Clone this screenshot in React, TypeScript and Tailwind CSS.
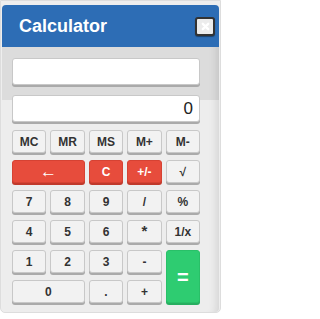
import React from 'react';

type Key = { label: string; span?: string; tone?: 'red' | 'green'; text?: string };

const keys: Key[] = [
  { label: 'MC' }, { label: 'MR' }, { label: 'MS' }, { label: 'M+' }, { label: 'M-' },
  { label: '←', span: 'col-span-2', tone: 'red', text: 'text-[17px] font-normal' }, { label: 'C', tone: 'red' }, { label: '+/-', tone: 'red' }, { label: '√' },
  { label: '7' }, { label: '8' }, { label: '9' }, { label: '/' }, { label: '%' },
  { label: '4' }, { label: '5' }, { label: '6' }, { label: '*', text: 'text-[15px]' }, { label: '1/x' },
  { label: '1' }, { label: '2' }, { label: '3' }, { label: '-' }, { label: '=', span: 'row-span-2', tone: 'green', text: 'text-[20px]' },
  { label: '0', span: 'col-span-2' }, { label: '.' }, { label: '+' },
];

const toneClass = (tone?: string) => {
  if (tone === 'red') return 'bg-[#e74c3c] text-white border-[#d64233] shadow-[0_2px_0_#c0392b]';
  if (tone === 'green') return 'bg-[#2ecc71] text-white border-[#29c068] shadow-[0_2px_0_#27ae60]';
  return 'bg-[#f2f2f2] text-[#333] border-[#c8c8c8] shadow-[0_2px_0_#aaaaaa]';
};

const App = () => {
  return (
    <div className="font-['Liberation_Sans',Arial,sans-serif] bg-white w-[225px] h-[319px]">
      <div className="w-[221px] h-[313px] bg-[#eeeeee] border border-[#dddddd] rounded-b-[5px] pt-[4px] px-[1px] flex flex-col">
        <div className="h-[42px] bg-[#2d6db5] rounded-t-[4px] flex items-center justify-between pl-[17px] pr-[4px]">
          <span className="text-white font-bold text-[18px]">Calculator</span>
          <div className="w-[20px] h-[19px] rounded-[3px] border-2 border-[#333] bg-[#ececec] flex items-center justify-center shadow-[0_1px_1px_rgba(0,0,0,0.4)]">
            <svg width="9" height="9" viewBox="0 0 10 10">
              <path d="M2 2 L8 8 M8 2 L2 8" stroke="#ffffff" strokeWidth="2.6" strokeLinecap="round" />
            </svg>
          </div>
        </div>
        <div className="flex-1 rounded-b-[4px] bg-[linear-gradient(to_bottom,#dcdcdc_0,#dcdcdc_53px,#ededed_53px)] shadow-[inset_-10px_0_8px_-8px_rgba(0,0,0,0.12)] pl-[10px] pt-[11px]">
          <div className="w-[188px] h-[27px] bg-white border border-[#c8c8c8] rounded-[3px] shadow-[0_2px_0_#aaaaaa]" />
          <div className="mt-[10px] w-[188px] h-[27px] bg-white border border-[#c8c8c8] rounded-[3px] shadow-[0_2px_0_#aaaaaa] flex items-center justify-end pr-[6px] text-[17px] text-[#222]">
            0
          </div>
          <div className="mt-[8px] w-[188px] grid grid-cols-5 auto-rows-[23px] gap-x-[4px] gap-y-[7px]">
            {keys.map((k) => (
              <div
                key={k.label}
                className={`${k.span ?? ''} ${toneClass(k.tone)} border rounded-[3px] flex items-center justify-center font-bold ${k.text ?? 'text-[12px]'}`}
              >
                {k.label}
              </div>
            ))}
          </div>
        </div>
      </div>
    </div>
  );
};

export default App;
